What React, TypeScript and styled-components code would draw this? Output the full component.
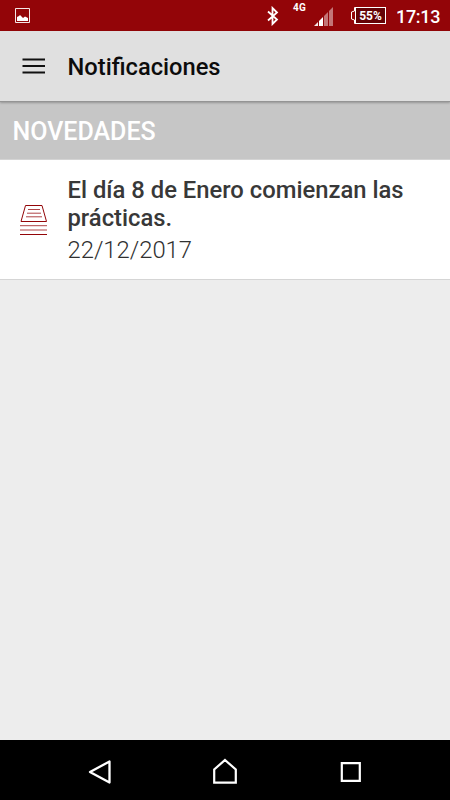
import React from 'react';
import styled, { createGlobalStyle } from 'styled-components';

const GlobalStyle = createGlobalStyle`
  * { box-sizing: border-box; }
  body { margin: 0; font-family: Roboto, sans-serif; background: #ededed; }
`;

const Screen = styled.div`
  width: 450px;
  height: 800px;
  display: flex;
  flex-direction: column;
  overflow: hidden;
  background: #ededed;
`;

const StatusBar = styled.header`
  flex: none;
  height: 31px;
  display: flex;
  align-items: flex-start;
  padding: 0 9px 0 15px;
  background: #930508;
  color: #fff;
`;

const Icon = styled.svg<{ $top?: number; $left?: number }>`
  display: block;
  flex: none;
  margin: ${p => p.$top ?? 0}px 0 0 ${p => p.$left ?? 0}px;
`;

const Network = styled.span`
  margin: 1px 0 0 13px;
  width: 14px;
  font-size: 10px;
  line-height: 13px;
  font-weight: 700;
  letter-spacing: 0.2px;
`;

const Spacer = styled.div`
  flex: 1;
`;

const Battery = styled.div`
  display: flex;
  margin: 7px 0 0 17px;
`;

const Charge = styled.span`
  width: 31px;
  height: 17px;
  margin-left: -1px;
  border: 1px solid #fff;
  background: #650306;
  font-size: 12px;
  line-height: 16px;
  font-weight: 700;
  letter-spacing: -0.1px;
  text-align: center;
  white-space: nowrap;
`;

const Clock = styled.time`
  margin-left: 10px;
  width: 45px;
  font-size: 18px;
  line-height: 33px;
  font-weight: 500;
  letter-spacing: -0.3px;
  white-space: nowrap;
`;

const AppBar = styled.div`
  position: relative;
  flex: none;
  height: 71px;
  display: flex;
  align-items: center;
  padding: 0 22px 0;
  background: #e0e0e0;
  border-bottom: 1px solid #949494;
  box-shadow: 0 1px 2px rgba(0, 0, 0, 0.25);
`;

const Title = styled.h1`
  margin: 2px 0 0 21.5px;
  font-size: 23.7px;
  line-height: 30px;
  font-weight: 500;
  color: #0c0c0c;
`;

const SectionHeader = styled.h2`
  flex: none;
  height: 58px;
  margin: 0;
  padding: 0 12.5px;
  font-size: 25px;
  line-height: 59px;
  font-weight: 500;
  color: #fff;
  background: #c6c6c6;
  border-bottom: 1px solid #d4d4d4;
`;

const Item = styled.article`
  flex: none;
  height: 120px;
  display: flex;
  padding: 16px 20px 0;
  background: #fff;
  border-bottom: 1px solid #d5d5d5;
`;

const ItemText = styled.div`
  margin-left: 19.5px;
  font-size: 23.8px;
`;

const Message = styled.div`
  line-height: 28px;
  font-weight: 500;
  color: #383838;
`;

const DateText = styled.div`
  margin-top: 4px;
  line-height: 28px;
  font-weight: 300;
  color: #303030;
`;

const Content = styled.main`
  flex: 1;
`;

const NavBar = styled.nav`
  flex: none;
  height: 60px;
  display: grid;
  grid-template-columns: repeat(3, 125px);
  justify-content: center;
  justify-items: center;
  background: #000;
`;

export default function App() {
  return (
    <>
      <GlobalStyle />
      <Screen>
        <StatusBar>
          <Icon $top={8} width="15" height="15" viewBox="0 0 15 15">
            <path d="M.5.5h14v14H.5z" fill="none" stroke="#fff" strokeOpacity=".9" />
            <path d="M2 13V9l2-1 1-1 2 2 1 1 2-1.5 3 1.5v3z" fill="#fff" />
          </Icon>
          <Spacer />
          <Icon $top={6} width="14" height="20" viewBox="0 0 14 20">
            <path d="M2 5.5l9 8L6.5 18V2L11 6.5l-9 8" fill="none" stroke="#fff" strokeWidth="1.8" />
          </Icon>
          <Network>4G</Network>
          <Icon $top={7} $left={7} width="20" height="19" viewBox="0 0 20 19">
            <path d="M0 19l4-4v4z" fill="#fff" fillOpacity=".9" />
            <path d="M5 14l4-4v9H5z" fill="#fff" />
            <path d="M10 9l4-4v14h-4zM15 4l4-4v19h-4z" fill="#fff" fillOpacity=".45" />
          </Icon>
          <Battery>
            <Icon width="5" height="17" viewBox="0 0 5 17">
              <path d="M5 .5H3.5V4L.5 5v7l3 1v3.5H5" fill="none" stroke="#fff" />
            </Icon>
            <Charge>55%</Charge>
          </Battery>
          <Clock>17:13</Clock>
        </StatusBar>
        <AppBar>
          <Icon width="24" height="16" viewBox="0 0 24 16">
            <path d="M.5 1.5h22.5M.5 8h22.5M.5 14.5h22.5" stroke="#111" strokeWidth="2.1" />
          </Icon>
          <Title>Notificaciones</Title>
        </AppBar>
        <SectionHeader>NOVEDADES</SectionHeader>
        <Item>
          <Icon $top={28} width="28" height="32" viewBox="0 0 28 32" fill="none" stroke="#930508">
            <path d="M5.5 1.5h16.5l4.5 16H1z" />
            <path d="M8 5.5h12M7 9.2h14M6 12.8h16M0 21.7h27M0 26h27" strokeOpacity=".75" />
            <path d="M0 30.5h27" />
          </Icon>
          <ItemText>
            <Message>El día 8 de Enero comienzan las prácticas.</Message>
            <DateText>22/12/2017</DateText>
          </ItemText>
        </Item>
        <Content />
        <NavBar>
          <Icon $top={20} width="24" height="26" viewBox="0 0 24 26">
            <path d="M2 12L21.5 1.5v21z" fill="none" stroke="#fff" strokeWidth="2.3" strokeLinejoin="round" />
          </Icon>
          <Icon $top={18} width="24" height="26" viewBox="0 0 24 26">
            <path d="M12 2l10.8 9.5v13.2H1.2V11.5z" fill="none" stroke="#fff" strokeWidth="2.2" />
          </Icon>
          <Icon $top={22} $left={1} width="22" height="20" viewBox="0 0 22 20">
            <path d="M1.8 1.2h18v17.6h-18z" fill="none" stroke="#fff" strokeWidth="2.2" />
          </Icon>
        </NavBar>
      </Screen>
    </>
  );
}
